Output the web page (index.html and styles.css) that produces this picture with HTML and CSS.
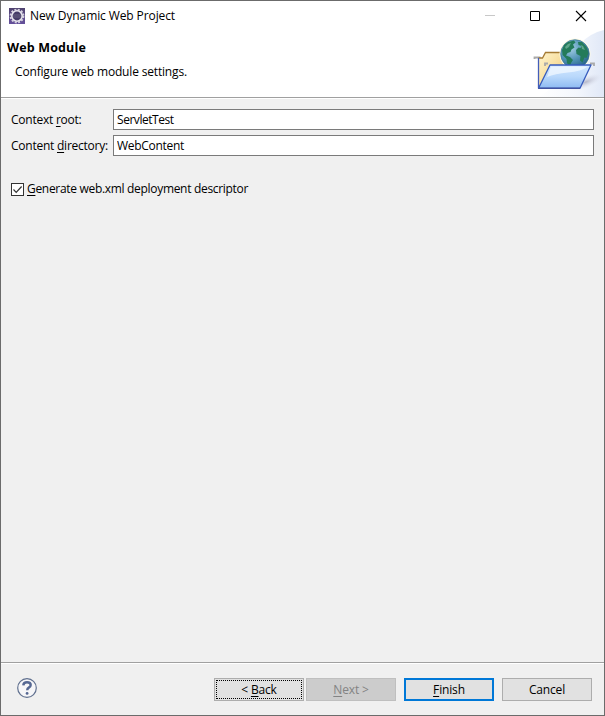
FILE: index.html
```html
<!DOCTYPE html>
<html lang="en">
<head>
    <meta charset="UTF-8">
    <meta name="viewport" content="width=device-width, initial-scale=1.0">
    <title>New Dynamic Web Project</title>
    <link rel="stylesheet" href="styles.css">
</head>
<body>
    <div class="dialog">
        <div class="titlebar">
            <svg class="app-icon" width="16" height="16" viewBox="0 0 16 16">
                <defs>
                    <linearGradient id="app" x1="0" y1="0" x2="0" y2="1">
                        <stop offset="0" stop-color="#50436f"/>
                        <stop offset="1" stop-color="#65509c"/>
                    </linearGradient>
                </defs>
                <rect width="16" height="16" fill="url(#app)"/>
                <circle cx="8" cy="8" r="6.5" fill="none" stroke="#d5d1df" stroke-width="1.8" stroke-dasharray="2 1.4"/>
                <circle cx="8" cy="8" r="5.2" fill="#453c68" stroke="#e8e6ee" stroke-width="1.6"/>
                <path d="M4 7h8M4 9h8" stroke="#77718e" stroke-width=".7"/>
            </svg>
            <div class="title">New Dynamic Web Project</div>
            <svg class="controls" width="102" height="12" viewBox="0 0 102 12">
                <path d="M0 5.5h10" stroke="#c8c8c8"/>
                <path d="M45.500 1.500h9v9h-9z" fill="none" stroke="#000"/>
                <path d="M91 1l10 10M101 1l-10 10" stroke="#000" stroke-width="1.1"/>
            </svg>
        </div>
        <div class="banner">
            <div class="banner-text">
                <div class="heading">Web Module</div>
                <div class="message">Configure web module settings.</div>
            </div>
            <svg class="banner-art" width="75" height="67" viewBox="-1 0 75 67">
                <defs>
                    <linearGradient id="haze" x1="0" y1="0" x2="1" y2="0">
                        <stop offset="0" stop-color="#fff"/>
                        <stop offset=".6" stop-color="#f3f6fc"/>
                        <stop offset="1" stop-color="#e0e8f7"/>
                    </linearGradient>
                    <linearGradient id="manila" x1="0" y1="0" x2="1" y2="1">
                        <stop offset="0" stop-color="#fff5ce"/>
                        <stop offset="1" stop-color="#f1ca76"/>
                    </linearGradient>
                    <linearGradient id="front" x1="0" y1="0" x2="0" y2="1">
                        <stop offset="0" stop-color="#d4e8ff"/>
                        <stop offset=".5" stop-color="#b9d8fb"/>
                        <stop offset="1" stop-color="#8dbaf2"/>
                    </linearGradient>
                    <radialGradient id="sea" cx=".35" cy=".3" r=".75">
                        <stop offset="0" stop-color="#a5cfe6"/>
                        <stop offset=".55" stop-color="#5294b6"/>
                        <stop offset="1" stop-color="#286389"/>
                    </radialGradient>
                    <radialGradient id="shade">
                        <stop offset="0" stop-color="#b6b8c9"/>
                        <stop offset="1" stop-color="#e2e7f4" stop-opacity="0"/>
                    </radialGradient>
                </defs>
                <path d="M50 14Q60 3 74 0v67H8Q40 50 50 14z" fill="url(#haze)"/>
                <ellipse cx="56" cy="52" rx="18" ry="6" transform="rotate(-22 56 52)" fill="url(#shade)"/>
                <path d="M4.500 29v-1.500h6" fill="none" stroke="#aaa" stroke-width="1.800"/>
                <path d="M8.500 58V28h4l3-5.500h15l3 4v12L20 58z" fill="url(#manila)"/>
                <path d="M8.500 28h4l3-5.500h15l3 4" fill="none" stroke="#a57b35" stroke-width="1.300"/>
                <path d="M8.500 28v30" stroke="#435dba" stroke-width="1.300"/>
                <circle cx="45" cy="24" r="15.500" fill="#fffbe4"/>
                <circle cx="45" cy="24" r="14.300" fill="url(#sea)" stroke="#397493" stroke-width=".7"/>
                <path d="M32 20l2-5 4-3 6-1.500 1.500 2-2.500 2 1.500 3-3 2-1 2.500-3 1-1.500 2.500 4 1.500 3 3-2 3-1 4-3-4-.5-4-4-4z" fill="#247b5a"/>
                <path d="M48 12l4 0 4.500 5 2 6-2 5-2-.5-2 5-2.500-2 .5-4.500-4-2-.5-4 2.500-2.500 2 .5 1-2-3-1z" fill="#247b5a"/>
                <path d="M35 17l3-3 3-1-2 4-3 2zM51 15l2 1 2 4-3-1z" fill="#5fa58b"/>
                <path d="M15 36v-2.500h3M60 33.500h4v2.500" fill="none" stroke="#aaa" stroke-width="1.800"/>
                <path d="M20 35h41L50 58.300H8.500z" fill="url(#front)" stroke="#365bbd" stroke-width="1.300" stroke-linejoin="round"/>
                <path d="M21 36.500h37q-7 5-20 6T17 47z" fill="#f2f8ff" opacity=".75"/>
                <path d="M8.500 58.300h41.500" stroke="#4052a1" stroke-width="1.400"/>
            </svg>
        </div>
        <div class="content">
            <div class="field">
                <label class="label" for="root">Context <u>r</u>oot:</label>
                <input class="text text-root" id="root" type="text" value="ServletTest">
            </div>
            <div class="field">
                <label class="label" for="dir">Content <u>d</u>irectory:</label>
                <input class="text" id="dir" type="text" value="WebContent">
            </div>
            <div class="option">
                <svg class="check" width="13" height="13" viewBox="0 0 13 13">
                    <rect x=".5" y=".5" width="12" height="12" fill="#fff" stroke="#333"/>
                    <path d="M2.500 6.500l2.700 2.800L10.600 3.500" fill="none" stroke="#333" stroke-width="1.200"/>
                </svg>
                <div class="option-text"><u>G</u>enerate web.xml deployment descriptor</div>
            </div>
        </div>
        <div class="footer">
            <svg class="help" width="20" height="20" viewBox="0 0 20 20">
                <circle cx="10" cy="10" r="9.300" fill="#f6f6f8" stroke="#60708f" stroke-width="1.200"/>
                <path d="M6.300 7.300Q6.600 4.200 10 4.200q3.700 0 3.700 2.700 0 1.600-1.900 2.700-1.600.9-1.600 2.700" fill="none" stroke="#566893" stroke-width="2.400"/>
                <circle cx="10.100" cy="15.400" r="1.400" fill="#566893"/>
            </svg>
            <button class="btn back">&lt; <u>B</u>ack</button>
            <button class="btn next" disabled><u>N</u>ext &gt;</button>
            <button class="btn finish"><u>F</u>inish</button>
            <button class="btn cancel">Cancel</button>
        </div>
    </div>
</body>
</html>
```
FILE: styles.css
```css
body,html{
    margin: 0;
    width: 100%;
    height: 100%;
    overflow: hidden;
}
*{
    box-sizing: border-box;
}
.dialog{
    width: 100%;
    height: 100%;
    display: flex;
    flex-direction: column;
    border: 1px solid #6b6b6b;
    background: #f0f0f0;
    color: #000;
    font-family: "Open Sans", "Noto Sans CJK KR", sans-serif;
    font-size: 12px;
    line-height: 16px;
}
.dialog u{
    text-decoration-thickness: 1px;
    text-underline-offset: 2px;
    text-decoration-skip-ink: none;
}
.titlebar{
    height: 29px;
    display: flex;
    align-items: center;
    padding: 0 17px 0 8px;
    background: #fff;
}
.title{
    margin-left: 5px;
    flex: 1;
    letter-spacing: -0.1px;
}
.banner{
    height: 68px;
    display: flex;
    justify-content: space-between;
    background: #fff;
    border-bottom: 1px solid #a0a0a0;
}
.banner-text{
    padding: 10px 0 0 6px;
}
.heading{
    font-size: 12.5px;
    font-weight: bold;
    letter-spacing: 0.15px;
}
.message{
    margin: 8px 0 0 8px;
    letter-spacing: -0.17px;
}
.content{
    flex: 1;
    padding: 10px 10px 0;
    border-top: 1px solid #fff;
}
.field{
    display: flex;
    align-items: center;
    height: 21px;
    margin-bottom: 5px;
}
.label{
    width: 102px;
    white-space: nowrap;
    letter-spacing: -0.24px;
}
.text{
    flex: 1;
    height: 21px;
    padding: 0 3px;
    border: 1px solid #7a7a7a;
    background: #fff;
    font: inherit;
    letter-spacing: -0.3px;
    outline: none;
}
.text-root{
    letter-spacing: -0.45px;
}
.option{
    display: flex;
    align-items: center;
    margin-top: 25px;
}
.option-text{
    margin-left: 3px;
    letter-spacing: -0.31px;
}
.footer{
    height: 53px;
    display: flex;
    align-items: center;
    padding: 0 12px 0 16px;
    border-top: 1px solid #a0a0a0;
    box-shadow: inset 0 1px #fff;
}
.help{
    margin: 0 auto 2px 0;
}
.btn{
    width: 90px;
    height: 23px;
    padding: 1px 0 0;
    border: 1px solid #adadad;
    background: #e1e1e1;
    color: #000;
    font: inherit;
    letter-spacing: -0.15px;
}
.back{
    outline: 1px dotted #000;
    outline-offset: -3px;
}
.next{
    margin-left: 2px;
    border-color: #bfbfbf;
    background: #ccc;
    color: #838383;
}
.finish{
    margin-left: 8px;
    border: 2px solid #0078d7;
}
.cancel{
    margin-left: 8px;
}
```
